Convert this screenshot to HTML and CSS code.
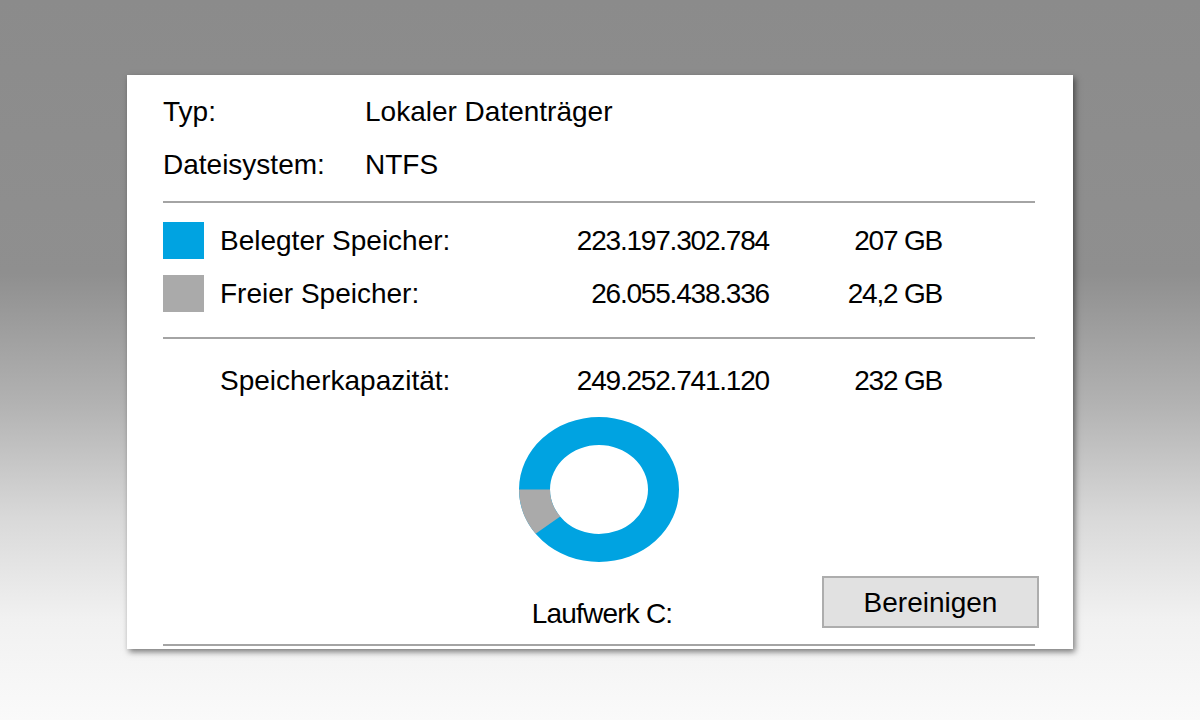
FILE: index.html
```html
<!DOCTYPE html>
<html lang="de">
<head>
    <meta charset="UTF-8">
    <link rel="stylesheet" href="styles.css">
    <title>Eigenschaften Laufwerk C</title>
</head>
<body>
    <div class="panel">
        <div class="info-row">
            <span class="info-label">Typ:</span>
            <span>Lokaler Datenträger</span>
        </div>
        <div class="info-row">
            <span class="info-label">Dateisystem:</span>
            <span>NTFS</span>
        </div>
        <div class="sep sep-first"></div>
        <!-- Speicherbelegung -->
        <div class="usage-row">
            <span class="swatch used"></span>
            <span>Belegter Speicher:</span>
            <span class="num">223.197.302.784</span>
            <span class="num">207 GB</span>
        </div>
        <div class="usage-row">
            <span class="swatch free"></span>
            <span>Freier Speicher:</span>
            <span class="num">26.055.438.336</span>
            <span class="num">24,2 GB</span>
        </div>
        <div class="sep sep-second"></div>
        <div class="usage-row capacity">
            <span></span>
            <span>Speicherkapazität:</span>
            <span class="num">249.252.741.120</span>
            <span class="num">232 GB</span>
        </div>
        <div class="chart">
            <svg width="160" height="145" viewBox="0 0 160 145">
                <path fill="#00a3e1" fill-rule="evenodd" d="M0 72.5 A80 72.5 0 1 0 160 72.5 A80 72.5 0 1 0 0 72.5 Z M31 72.5 A49 44.5 0 1 0 129 72.5 A49 44.5 0 1 0 31 72.5 Z"/>
                <path fill="#aaaaaa" d="M0 72.5 A80 72.5 0 0 0 16.6 116.7 L41.2 99.6 A49 44.5 0 0 1 31 72.5 Z"/>
            </svg>
        </div>
        <div class="footer">
            <span></span>
            <span class="drive">Laufwerk C:</span>
            <button class="btn" type="button">Bereinigen</button>
        </div>
        <div class="sep"></div>
    </div>
</body>
</html>
```

FILE: styles.css
```css
body {
    margin: 0;
    height: 720px;
    padding: 75px 0 0 127px;
    box-sizing: border-box;
    font-family: "Liberation Sans", Arial, sans-serif;
    font-size: 28px;
    color: #000;
    background: linear-gradient(to bottom, #8b8b8b 0%, #8f8f8f 38%, #b2b2b2 56%, #d9d9d9 72%, #f1f1f1 86%, #fafafa 100%);
}
.panel {
    width: 946px;
    height: 574px;
    padding: 10px 38px 0 36px;
    box-sizing: border-box;
    background-color: #fff;
    box-shadow: 2px 3px 6px rgba(0, 0, 0, 0.5);
}
/* Typ / Dateisystem */
.info-row {
    display: flex;
    height: 53px;
    line-height: 53px;
}
.info-label {
    width: 202px;
}
.sep {
    height: 2px;
    background-color: #a4a4a4;
}
.sep-first {
    margin: 10px 0 11px 0;
}
.sep-second {
    margin: 17px 0 15px 0;
}
/* Belegt / Frei / Kapazität */
.usage-row {
    display: grid;
    grid-template-columns: 57px 300px 249px 173px;
    align-items: center;
    height: 53px;
    line-height: 53px;
}
.num {
    text-align: right;
    letter-spacing: -1.2px;
}
.swatch {
    width: 41px;
    height: 37px;
}
.used {
    background-color: #00a3e1;
}
.free {
    background-color: #aaaaaa;
}
.chart {
    display: flex;
    justify-content: center;
    margin-top: 10px;
    height: 145px;
}
.chart svg {
    display: block;
}
.footer {
    display: grid;
    grid-template-columns: 1fr auto 1fr;
    height: 82px;
}
.drive {
    align-self: end;
    line-height: 32px;
    margin: 0 0 14px 6px;
    letter-spacing: -0.8px;
}
.btn {
    justify-self: end;
    align-self: start;
    margin: 14px -4px 0 0;
    width: 217px;
    height: 52px;
    padding: 2px 0 0 0;
    font-family: "Liberation Sans", Arial, sans-serif;
    font-size: 28px;
    color: #000;
    background-color: #e1e1e1;
    border: 2px solid #adadad;
}
```
